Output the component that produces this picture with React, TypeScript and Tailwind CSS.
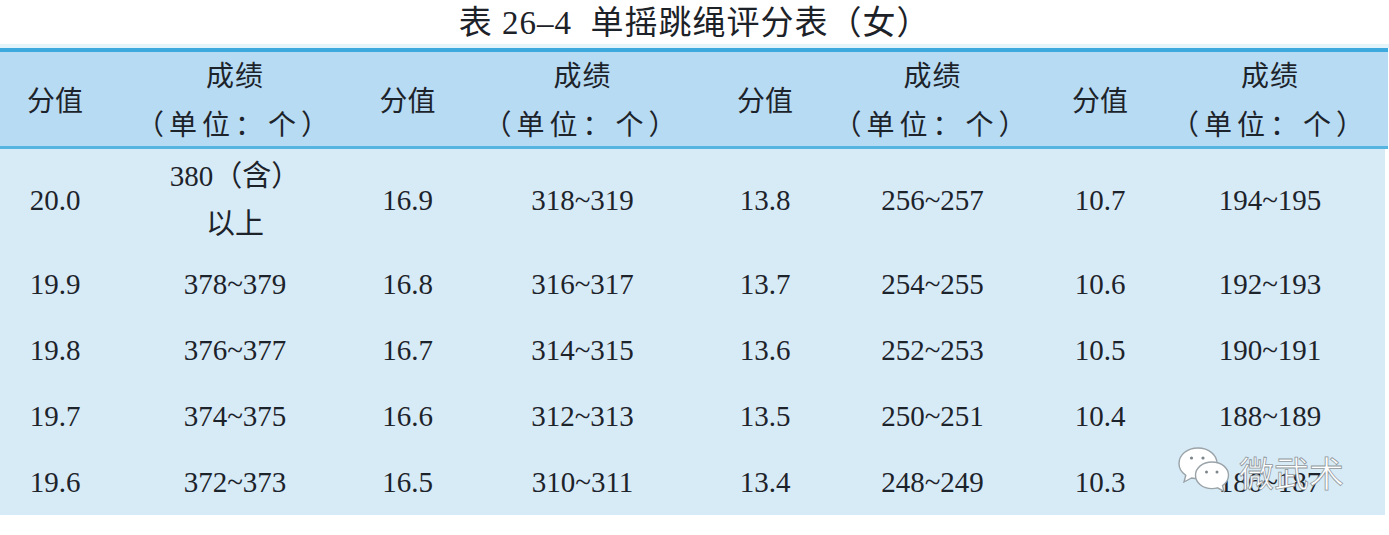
const COLS = 'grid grid-cols-[110px_250px_95px_255px_110px_225px_110px_230px]';

const rows: string[][] = [
  ['20.0', '380（含）|以上', '16.9', '318~319', '13.8', '256~257', '10.7', '194~195'],
  ['19.9', '378~379', '16.8', '316~317', '13.7', '254~255', '10.6', '192~193'],
  ['19.8', '376~377', '16.7', '314~315', '13.6', '252~253', '10.5', '190~191'],
  ['19.7', '374~375', '16.6', '312~313', '13.5', '250~251', '10.4', '188~189'],
  ['19.6', '372~373', '16.5', '310~311', '13.4', '248~249', '10.3', '186~187'],
];

function WeChatMark() {
  return (
    <div className="pointer-events-none absolute left-[22px] top-[-4px] flex items-center">
      <svg width="58" height="52" viewBox="0 0 58 52">
        <path
          d="M21 3C10 3 2 10 2 18.5c0 5 2.6 9 6.8 11.8L7 37l7.6-4c2 .5 4.2.8 6.4.8 11 0 19-7 19-15.3S32 3 21 3z"
          fill="#ffffff"
          stroke="#9aa3a8"
          strokeWidth="1.4"
        />
        <path
          d="M35 17c-9.4 0-16.5 6-16.5 13.3S25.6 43.6 35 43.6c2 0 3.8-.3 5.5-.8l6.5 3.6-1.5-5.8c3.6-2.4 6-6 6-10.3C51.5 23 44.4 17 35 17z"
          fill="#ffffff"
          stroke="#9aa3a8"
          strokeWidth="1.4"
        />
        <circle cx="14.5" cy="13" r="1.6" fill="#7d868b" />
        <circle cx="26" cy="13" r="1.6" fill="#7d868b" />
        <circle cx="29.5" cy="27" r="1.5" fill="#7d868b" />
        <circle cx="40" cy="27" r="1.5" fill="#7d868b" />
      </svg>
      <span className="ml-[4px] text-[35px] leading-none text-white [font-family:'Noto_Sans_CJK_SC',sans-serif] [-webkit-text-stroke:0.8px_#8e979c]">
        微武术
      </span>
    </div>
  );
}

function Cell({ text, last }: { text: string; last?: boolean }) {
  const lines = text.split('|');
  return (
    <div className="relative flex flex-col items-center justify-center text-[29px] leading-[48px] text-[#1d232a]">
      {lines.map((l) => (
        <span key={l}>{l}</span>
      ))}
      {last ? <WeChatMark /> : null}
    </div>
  );
}

export default function App() {
  return (
    <div className="h-[535px] w-[1389px] bg-white [font-family:'Liberation_Serif','Noto_Sans_CJK_SC',serif]">
      <div className="flex h-[44px] items-center justify-center pt-[2px] text-[33px] leading-none tracking-[1px] text-[#1c2228]">
        <span>表 26–4&nbsp;&nbsp;单摇跳绳评分表（女）</span>
      </div>
      <div className="h-[4px] bg-[#e3f4fa]" />
      <div className="w-[1388px] border-t-[4px] border-b-[3px] border-t-[#3ea9dd] border-b-[#55b4e0] bg-[#b7dbf3]">
        <div className={`${COLS} h-[94px] text-[28px] text-[#1d232a]`}>
          {[0, 1, 2, 3].map((i) => (
            <div key={i} className="contents">
              <div className="flex items-center justify-center pt-[2px]">分值</div>
              <div className="flex flex-col items-center justify-center leading-[49px]">
                <span className="tracking-[1px]">成绩</span>
                <span className="tracking-[5px]">（单位：个）</span>
              </div>
            </div>
          ))}
        </div>
      </div>
      <div className="w-[1385px] bg-[#d7ebf7]">
        {rows.map((r, ri) => (
          <div key={r[0]} className={`${COLS} ${ri === 0 ? 'h-[102px]' : 'h-[66px]'}`}>
            {r.map((c, ci) => (
              <Cell key={ci} text={c} last={ri === 4 && ci === 7} />
            ))}
          </div>
        ))}
      </div>
    </div>
  );
}
